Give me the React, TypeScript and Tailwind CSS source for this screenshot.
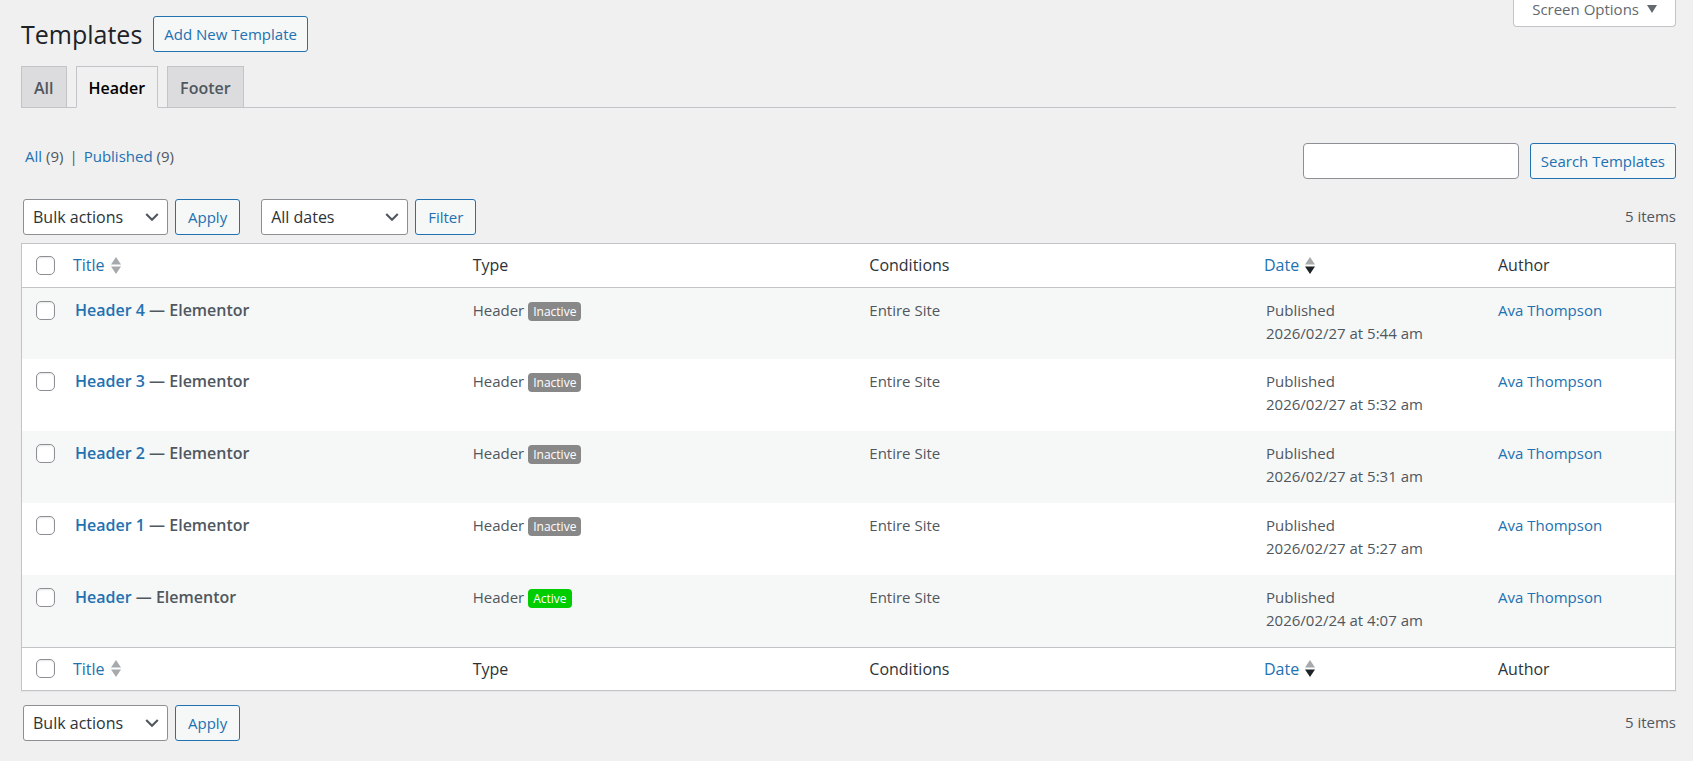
import React from "react";
import { clsx } from "clsx";

type Template = {
  id: number;
  title: string;
  active: boolean;
  date: string;
};

const templates: Template[] = [
  { id: 5, title: "Header 4", active: false, date: "2026/02/27 at 5:44 am" },
  { id: 4, title: "Header 3", active: false, date: "2026/02/27 at 5:32 am" },
  { id: 3, title: "Header 2", active: false, date: "2026/02/27 at 5:31 am" },
  { id: 2, title: "Header 1", active: false, date: "2026/02/27 at 5:27 am" },
  { id: 1, title: "Header", active: true, date: "2026/02/24 at 4:07 am" },
];

const tabs = ["All", "Header", "Footer"];

function Button({ wide, children }: { wide?: boolean; children: React.ReactNode }) {
  return (
    <button
      type="button"
      className={clsx(
        "h-9 rounded-[3px] border border-[#2271b1] bg-[#f6f7f7] text-[15px] whitespace-nowrap text-[#2271b1]",
        wide ? "px-2.5" : "px-3",
      )}
    >
      {children}
    </button>
  );
}

function Select({ label, option, className }: { label: string; option: string; className: string }) {
  return (
    <div className={clsx("relative", className)}>
      <select
        aria-label={label}
        className="h-9 w-full appearance-none rounded-[3px] border border-[#8c8f94] bg-white pr-7 pl-[9px] text-base text-[#2c3338]"
      >
        <option>{option}</option>
      </select>
      <svg viewBox="0 0 20 20" className="pointer-events-none absolute top-2 right-1.5 size-5" aria-hidden="true">
        <path d="M4.2 7l5.8 5.8L15.800 7" fill="none" stroke="#50575e" strokeWidth="2.1" />
      </svg>
    </div>
  );
}

function SortArrows({ desc }: { desc?: boolean }) {
  return (
    <svg viewBox="0 0 10 17" className="ml-1.5 h-[17px] w-2.5" aria-hidden="true">
      <path d="M5 0l5 7.500H0z" fill="#a7aaad" />
      <path d="M0 9.500h10l-5 7.500z" fill={desc ? "#1d2327" : "#a7aaad"} />
    </svg>
  );
}

function Checkbox({ label }: { label: string }) {
  return (
    <input
      type="checkbox"
      aria-label={label}
      className="block size-[19px] appearance-none rounded-[5px] border border-[#8c8f94] bg-white shadow-[inset_0_1px_2px_rgba(0,0,0,0.1)]"
    />
  );
}

function HeadingRow() {
  return (
    <tr className="h-[43px] text-left text-base text-[#2c3338]">
      <td className="pl-3.5">
        <Checkbox label="Select All" />
      </td>
      <th className="pl-[9px] font-normal">
        <a href="#title" className="flex items-center text-[#2271b1]">
          Title <SortArrows />
        </a>
      </th>
      <th className="pl-3 font-normal">Type</th>
      <th className="pl-3 font-normal">Conditions</th>
      <th className="pl-2.5 font-normal">
        <a href="#date" className="flex items-center text-[#2271b1]">
          Date <SortArrows desc />
        </a>
      </th>
      <th className="pl-2.5 font-normal">Author</th>
    </tr>
  );
}

function TemplateRow({ template }: { template: Template }) {
  return (
    <tr className="h-18 align-top odd:bg-[#f6f7f7]">
      <td className="pt-[13px] pl-3.5">
        <Checkbox label={`Select ${template.title}`} />
      </td>
      <td className="pt-[11px] pl-[11px] text-base leading-[23px] font-semibold">
        <a href="#edit" className="text-[#2271b1]">
          {template.title}
        </a>{" "}
        — Elementor
      </td>
      <td className="pt-[11px] pl-3">
        <div className="flex items-center gap-1">
          Header
          <span
            className={clsx(
              "mt-0.5 rounded-[4px] px-[5px] text-xs leading-[19px] text-white",
              template.active ? "bg-[#00cd00]" : "bg-[#888]",
            )}
          >
            {template.active ? "Active" : "Inactive"}
          </span>
        </div>
      </td>
      <td className="pt-[11px] pl-3">Entire Site</td>
      <td className="pt-[11px] pl-3">
        Published
        <br />
        {template.date}
      </td>
      <td className="pt-[11px] pl-2.5">
        <a href="#author" className="text-[#2271b1]">
          Ava Thompson
        </a>
      </td>
    </tr>
  );
}

export default function App() {
  return (
    <div className="min-h-screen bg-[#f0f0f1] pr-[17px] pb-5 pl-[21px] font-['Open_Sans','Noto_Sans',sans-serif] text-[15px] leading-[23px] text-[#50575e]">
      <div className="flex items-start justify-between">
        <div className="flex items-center gap-[11px] pt-4">
          <h1 className="text-[25px] leading-[34px] text-[#1d2327]">Templates</h1>
          <Button wide>Add New Template</Button>
        </div>
        <button
          type="button"
          className="flex h-[27px] items-start gap-2 rounded-b-[4px] border border-t-0 border-[#c3c4c7] bg-white px-[18px] leading-[18px] text-[#646970]"
        >
          Screen Options
          <svg viewBox="0 0 10 8" className="mt-[5px] h-2 w-2.5" aria-hidden="true">
            <path d="M0 0h10L5 8z" fill="#646970" />
          </svg>
        </button>
      </div>

      <nav className="mt-3.5 flex gap-[9px] border-b border-[#c3c4c7]">
        {tabs.map((tab) => (
          <a
            key={tab}
            href={`#${tab.toLowerCase()}`}
            className={clsx(
              "border border-[#c3c4c7] px-3 pt-[9px] pb-[7px] text-base leading-6 font-semibold",
              tab === "Header" ? "-mb-px border-b-[#f0f0f1] bg-[#f0f0f1] text-black" : "border-b-0 bg-[#dcdcde]",
            )}
          >
            {tab}
          </a>
        ))}
      </nav>

      <div className="flex items-start justify-between pt-[35px]">
        <ul className="flex pt-0.5 pl-1">
          <li>
            <a href="#all" className="text-[#2271b1]">
              All
            </a>{" "}
            (9)
          </li>
          <li className="px-1.5">|</li>
          <li>
            <a href="#published" className="text-[#2271b1]">
              Published
            </a>{" "}
            (9)
          </li>
        </ul>
        <form className="flex gap-[11px]">
          <input
            type="search"
            aria-label="Search Templates"
            className="h-9 w-54 rounded-[4px] border border-[#8c8f94] bg-white px-2"
          />
          <Button wide>Search Templates</Button>
        </form>
      </div>

      <div className="flex items-center justify-between pt-5 pb-2 pl-0.5">
        <div className="flex gap-[7px]">
          <Select label="Select bulk action" option="Bulk actions" className="w-[145px]" />
          <Button>Apply</Button>
          <Select label="Filter by date" option="All dates" className="ml-3.5 w-[147px]" />
          <Button>Filter</Button>
        </div>
        <span className="pb-0.5">5 items</span>
      </div>

      <div className="border border-[#c3c4c7] bg-white shadow-[0_1px_1px_rgba(0,0,0,0.04)]">
        <table className="w-full table-fixed">
          <colgroup>
            <col className="w-[42px]" />
            <col />
            <col />
            <col />
            <col className="w-[234px]" />
            <col className="w-[187px]" />
          </colgroup>
          <thead className="border-b border-[#c3c4c7]">
            <HeadingRow />
          </thead>
          <tbody>
            {templates.map((template) => (
              <TemplateRow key={template.id} template={template} />
            ))}
          </tbody>
          <tfoot className="border-t border-[#c3c4c7]">
            <HeadingRow />
          </tfoot>
        </table>
      </div>

      <div className="flex items-center justify-between pt-3.5 pl-0.5">
        <div className="flex gap-[7px]">
          <Select label="Select bulk action" option="Bulk actions" className="w-[145px]" />
          <Button>Apply</Button>
        </div>
        <span className="pb-0.5">5 items</span>
      </div>
    </div>
  );
}
